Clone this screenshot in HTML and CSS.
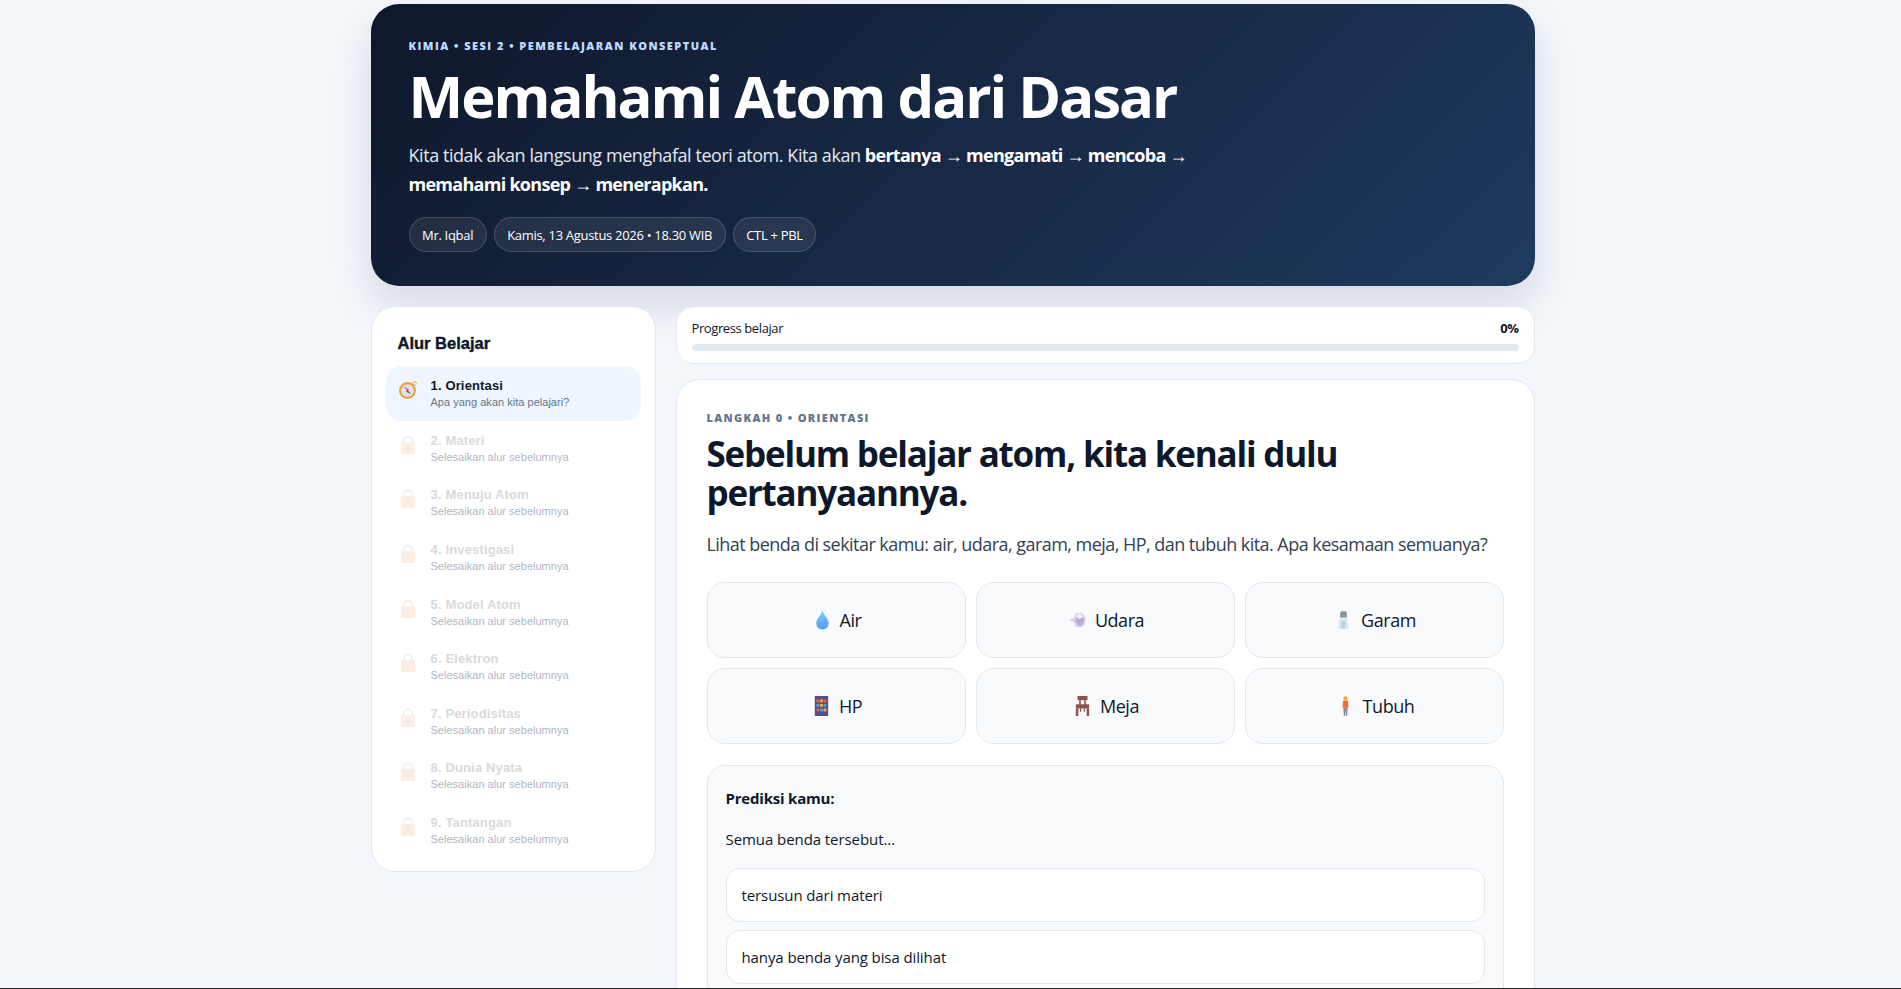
FILE: index.html
```html
<!DOCTYPE html>
<html lang="id">
<head>
    <meta charset="UTF-8">
    <meta name="viewport" content="width=device-width, initial-scale=1.0">
    <title>Memahami Atom dari Dasar</title>
    <link rel="stylesheet" href="styles.css">
</head>
<body>
    <svg class="defs" width="0" height="0">
        <symbol id="lock" viewBox="0 0 20 20">
            <path d="M6 8V5.500a4 4 0 0 1 8 0V8" fill="none" stroke="#b4b8c0" stroke-width="1.800"/>
            <rect x="3" y="7" width="14" height="12" rx="1.500" fill="#f9a56a"/>
            <circle cx="10" cy="12" r="1.500" fill="#7f93b8"/>
            <rect x="9.300" y="12" width="1.400" height="3.500" fill="#7f93b8"/>
        </symbol>
    </svg>

    <div class="page">
        <header class="hero">
            <div class="hero-kicker">KIMIA • SESI 2 • PEMBELAJARAN KONSEPTUAL</div>
            <h1>Memahami Atom dari Dasar</h1>
            <p class="hero-text">Kita tidak akan langsung menghafal teori atom. Kita akan <strong>bertanya → mengamati → mencoba →<br>memahami konsep → menerapkan.</strong></p>
            <div class="pills">
                <span class="pill">Mr. Iqbal</span>
                <span class="pill">Kamis, 13 Agustus 2026 • 18.30 WIB</span>
                <span class="pill">CTL + PBL</span>
            </div>
        </header>

        <div class="layout">
            <aside class="sidebar">
                <h3>Alur Belajar</h3>
                <div class="step active">
                    <svg class="step-icon" viewBox="0 0 20 20">
                        <circle cx="16.500" cy="3.500" r="1.800" fill="none" stroke="#e0a63a" stroke-width="1"/>
                        <circle cx="9.500" cy="10.500" r="8.500" fill="#e3a448"/>
                        <circle cx="9.500" cy="10.500" r="6.300" fill="#e6dfe6"/>
                        <path d="M5.500 6.500l5.500 3-1.500 1.500z" fill="#d9487a"/>
                        <path d="M13.500 14.500l-5.500-3 1.500-1.500z" fill="#4d5a70"/>
                    </svg>
                    <div>
                        <div class="step-title">1. Orientasi</div>
                        <div class="step-sub">Apa yang akan kita pelajari?</div>
                    </div>
                </div>
                <div class="step locked">
                    <svg class="step-icon"><use href="#lock"/></svg>
                    <div><div class="step-title">2. Materi</div><div class="step-sub">Selesaikan alur sebelumnya</div></div>
                </div>
                <div class="step locked">
                    <svg class="step-icon"><use href="#lock"/></svg>
                    <div><div class="step-title">3. Menuju Atom</div><div class="step-sub">Selesaikan alur sebelumnya</div></div>
                </div>
                <div class="step locked">
                    <svg class="step-icon"><use href="#lock"/></svg>
                    <div><div class="step-title">4. Investigasi</div><div class="step-sub">Selesaikan alur sebelumnya</div></div>
                </div>
                <div class="step locked">
                    <svg class="step-icon"><use href="#lock"/></svg>
                    <div><div class="step-title">5. Model Atom</div><div class="step-sub">Selesaikan alur sebelumnya</div></div>
                </div>
                <div class="step locked">
                    <svg class="step-icon"><use href="#lock"/></svg>
                    <div><div class="step-title">6. Elektron</div><div class="step-sub">Selesaikan alur sebelumnya</div></div>
                </div>
                <div class="step locked">
                    <svg class="step-icon"><use href="#lock"/></svg>
                    <div><div class="step-title">7. Periodisitas</div><div class="step-sub">Selesaikan alur sebelumnya</div></div>
                </div>
                <div class="step locked">
                    <svg class="step-icon"><use href="#lock"/></svg>
                    <div><div class="step-title">8. Dunia Nyata</div><div class="step-sub">Selesaikan alur sebelumnya</div></div>
                </div>
                <div class="step locked">
                    <svg class="step-icon"><use href="#lock"/></svg>
                    <div><div class="step-title">9. Tantangan</div><div class="step-sub">Selesaikan alur sebelumnya</div></div>
                </div>
            </aside>

            <main class="content">
                <div class="progress-card">
                    <div class="progress-row">
                        <span>Progress belajar</span>
                        <strong>0%</strong>
                    </div>
                    <div class="progress-bar"></div>
                </div>

                <section class="card">
                    <div class="card-kicker">LANGKAH 0 • ORIENTASI</div>
                    <h2>Sebelum belajar atom, kita kenali dulu<br>pertanyaannya.</h2>
                    <p class="lead">Lihat benda di sekitar kamu: air, udara, garam, meja, HP, dan tubuh kita. Apa kesamaan semuanya?</p>

                    <div class="things">
                        <div class="thing">
                            <svg class="thing-icon" viewBox="0 0 20 24">
                                <defs><linearGradient id="drop" x1="0" y1="0" x2="0" y2="1"><stop offset="0" stop-color="#7cc8ff"/><stop offset="1" stop-color="#4f9cf0"/></linearGradient></defs>
                                <path d="M10 1C8 7 2.500 11 2.500 16a7.500 7.500 0 0 0 15 0C17.500 11 12 7 10 1z" fill="url(#drop)"/>
                            </svg>
                            Air
                        </div>
                        <div class="thing">
                            <svg class="thing-icon" viewBox="0 0 20 24">
                                <path d="M0 12l6-3 2-5 7-1 5 6-1 8-5 4-6-1-2-5z" fill="#d8cfe8"/>
                                <path d="M9 8l6-1 3 4-2 7-5 1-3-5z" fill="#b9aadb"/>
                                <path d="M8 7l5-3 4 4-5 3z" fill="#f2eff8"/>
                            </svg>
                            Udara
                        </div>
                        <div class="thing">
                            <svg class="thing-icon" viewBox="0 0 20 24">
                                <path d="M5.500 9h9l2 12a2 2 0 0 1-2 2h-9a2 2 0 0 1-2-2z" fill="#d3edf8"/>
                                <rect x="7.500" y="13" width="5" height="9" fill="#c9ced3"/>
                                <path d="M6 3.500a2 2 0 0 1 2-2h4a2 2 0 0 1 2 2V9H6z" fill="#8d9297"/>
                            </svg>
                            Garam
                        </div>
                        <div class="thing">
                            <svg class="thing-icon" viewBox="0 0 20 24">
                                <rect x="2" y="0" width="16" height="24" fill="#5d4a8c"/>
                                <g fill="#f0a830">
                                    <rect x="4" y="4" width="3.500" height="3.500" fill="#e5604a"/><rect x="8.300" y="4" width="3.500" height="3.500"/><rect x="12.500" y="4" width="3.500" height="3.500" fill="#e5604a"/>
                                    <rect x="4" y="9.500" width="3.500" height="3.500" fill="#3fa7e8"/><rect x="8.300" y="9.500" width="3.500" height="3.500"/><rect x="12.500" y="9.500" width="3.500" height="3.500" fill="#3fa7e8"/>
                                    <rect x="4" y="15" width="3.500" height="3.500" fill="#e5604a"/><rect x="8.300" y="15" width="3.500" height="3.500" fill="#3fa7e8"/><rect x="12.500" y="15" width="3.500" height="3.500"/>
                                </g>
                            </svg>
                            HP
                        </div>
                        <div class="thing">
                            <svg class="thing-icon" viewBox="0 0 20 24">
                                <g fill="#8a544c">
                                    <rect x="4" y="0" width="12" height="5"/>
                                    <rect x="6" y="5" width="2" height="6"/><rect x="12" y="5" width="2" height="6"/>
                                    <rect x="2" y="10" width="16" height="5"/>
                                    <path d="M2 15h3v9H2zM15 15h3v9h-3zM7 15h1.500v4H7zM11.500 15H13v4h-1.500z"/>
                                </g>
                            </svg>
                            Meja
                        </div>
                        <div class="thing">
                            <svg class="thing-icon" viewBox="0 0 20 24">
                                <circle cx="10" cy="2.800" r="2.500" fill="#f0a830"/>
                                <path d="M7 7a1.500 1.500 0 0 1 1.500-1.500h3A1.500 1.500 0 0 1 13 7l.5 7h-7z" fill="#f26a2e"/>
                                <path d="M7.500 14h5l-.5 10h-1.500L10 17l-.5 7H8z" fill="#8f86a0"/>
                            </svg>
                            Tubuh
                        </div>
                    </div>

                    <div class="predict">
                        <div class="predict-title">Prediksi kamu:</div>
                        <p class="predict-text">Semua benda tersebut...</p>
                        <div class="option">tersusun dari materi</div>
                        <div class="option">hanya benda yang bisa dilihat</div>
                    </div>
                </section>
            </main>
        </div>
    </div>
    <div class="bottom-line"></div>
</body>
</html>
```

FILE: styles.css
```css
html, body {
    height: 989px;
    overflow: hidden;
}
body {
    margin: 0;
    padding-left: 4px;
    font-family: 'Open Sans', 'Noto Sans', sans-serif;
    background-color: #f3f6fb;
    color: #0f172a;
}
.defs {
    position: absolute;
}
.page {
    width: 1164px;
    margin: 0 auto;
    padding-top: 4px;
}
.hero {
    height: 282px;
    box-sizing: border-box;
    padding: 34px 38px 0;
    border-radius: 28px;
    background: linear-gradient(135deg, #0f172a, #1e3a5f);
    box-shadow: 0 20px 40px rgba(15, 23, 42, 0.12);
    color: white;
}
.hero-kicker {
    font-size: 11px;
    line-height: 15px;
    font-weight: 800;
    letter-spacing: 1.47px;
    color: #bfdbfe;
}
.hero h1 {
    margin: 8px 0 0;
    font-size: 58px;
    line-height: 70px;
    font-weight: 700;
    letter-spacing: -2px;
}
.hero-text {
    margin: 10px 0 0;
    font-size: 18px;
    line-height: 29px;
    letter-spacing: -0.44px;
    color: #e2e8f0;
}
.hero-text strong {
    letter-spacing: -0.72px;
    color: white;
}
.pills {
    display: flex;
    gap: 7px;
    margin-top: 18px;
}
.pill {
    padding: 0 12.500px;
    height: 33px;
    line-height: 34px;
    border: 1px solid rgba(255, 255, 255, 0.15);
    border-radius: 18px;
    background-color: rgba(255, 255, 255, 0.08);
    font-size: 13px;
    letter-spacing: -0.3px;
}
.layout {
    display: grid;
    grid-template-columns: 285px 859px;
    gap: 20px;
    margin-top: 20px;
    align-items: start;
}
.sidebar {
    box-sizing: border-box;
    height: 566px;
    padding: 26px 14px 0;
    background-color: white;
    border: 1px solid #e2e8f0;
    border-radius: 24px;
    font-family: 'Liberation Sans', Arial, sans-serif;
}
.sidebar h3 {
    margin: 0 0 13px 12px;
    font-size: 16.500px;
    line-height: 20px;
    font-weight: 700;
    -webkit-text-stroke: 0.4px #0f172a;
}
.step {
    display: flex;
    align-items: center;
    gap: 13px;
    height: 54.600px;
    box-sizing: border-box;
    padding: 0 12px;
    border-radius: 16px;
}
.step.active {
    background-color: #eff6ff;
}
.step.locked {
    opacity: 0.4;
}
.step-icon {
    width: 20px;
    height: 20px;
    flex: none;
    margin-bottom: 6px;
}
.step.locked .step-icon {
    opacity: 0.45;
}
.step-title {
    font-size: 13px;
    line-height: 19px;
    font-weight: 700;
    letter-spacing: 0.15px;
}
.step.locked .step-title {
    color: #a2a2a2;
}
.step-sub {
    font-size: 11px;
    line-height: 15px;
    letter-spacing: 0.02px;
    color: #64748b;
}
.step.locked .step-sub {
    color: #34446b;
}
.content {
    display: flex;
    flex-direction: column;
    gap: 15px;
}
.progress-card {
    box-sizing: border-box;
    height: 58px;
    padding: 12px 15px;
    background-color: white;
    border: 1px solid #e2e8f0;
    border-radius: 18px;
}
.progress-row {
    display: flex;
    justify-content: space-between;
    font-size: 13px;
    line-height: 18px;
    letter-spacing: -0.4px;
}
.progress-bar {
    height: 7px;
    margin-top: 7px;
    border-radius: 4px;
    background-color: #e2e8f0;
}
.card {
    padding: 30px;
    background-color: white;
    border: 1px solid #e2e8f0;
    border-radius: 24px;
}
.card-kicker {
    font-size: 11px;
    line-height: 16px;
    font-weight: 800;
    letter-spacing: 1.35px;
    color: #64748b;
}
.card h2 {
    margin: 8px 0 0;
    font-size: 35px;
    line-height: 39px;
    font-weight: 700;
    letter-spacing: -1.2px;
}
.lead {
    margin: 18px 0 0;
    font-size: 18px;
    line-height: 29px;
    letter-spacing: -0.54px;
    color: #334155;
}
.things {
    display: grid;
    grid-template-columns: repeat(3, 1fr);
    gap: 10px;
    margin-top: 23px;
}
.thing {
    display: flex;
    align-items: center;
    justify-content: center;
    gap: 9px;
    height: 76px;
    box-sizing: border-box;
    padding-left: 3px;
    background-color: #f8fafc;
    border: 1px solid #e2e8f0;
    border-radius: 18px;
    font-size: 18px;
    letter-spacing: -0.45px;
}
.thing-icon {
    width: 17px;
    height: 20px;
}
.predict {
    margin-top: 21px;
    padding: 20px 18px 18px;
    background-color: #f8fafc;
    border: 1px solid #e2e8f0;
    border-radius: 18px;
}
.predict-title {
    font-size: 15px;
    line-height: 24px;
    font-weight: 700;
    letter-spacing: -0.2px;
}
.predict-text {
    margin: 17px 0 17px;
    font-size: 15px;
    line-height: 24px;
    letter-spacing: -0.07px;
}
.option {
    box-sizing: border-box;
    height: 53.500px;
    margin-bottom: 8.500px;
    padding: 0 15px;
    line-height: 53px;
    background-color: white;
    border: 1px solid #e2e8f0;
    border-radius: 14px;
    font-size: 15px;
    letter-spacing: -0.1px;
}
.bottom-line {
    position: fixed;
    left: 0;
    right: 0;
    bottom: 0;
    height: 1px;
    background-color: #222;
}
```
